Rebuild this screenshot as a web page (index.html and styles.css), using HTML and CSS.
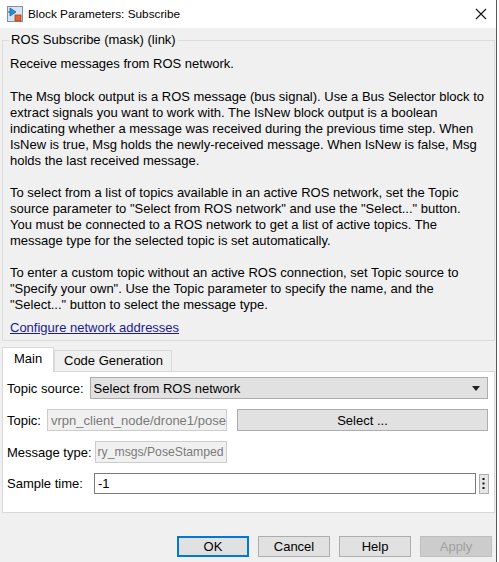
FILE: index.html
```html
<!DOCTYPE html>
<html>
<head>
<meta charset="utf-8">
<link rel="stylesheet" href="styles.css">
</head>
<body>
<div class="window">
  <div class="titlebar">
    <svg class="appicon" width="16" height="16" viewBox="0 0 16 16">
      <rect x="0.5" y="0.5" width="15" height="15" fill="#d8e4f0" stroke="#7f93a8"/>
      <path d="M3 2 L3 10 L9 6 Z" fill="#2a8fd6" stroke="#1a5f9a" stroke-width="0.8"/>
      <line x1="1" y1="6" x2="3" y2="6" stroke="#1a5f9a"/>
      <rect x="8" y="9" width="6" height="6" fill="#e8602c" stroke="#a8401a" stroke-width="0.8"/>
    </svg>
    <span class="title">Block Parameters: Subscribe</span>
    <svg class="close" width="12" height="12" viewBox="0 0 12 12">
      <path d="M1 1 L11 11 M11 1 L1 11" stroke="#111" stroke-width="1.1"/>
    </svg>
  </div>
  <div class="content">
    <fieldset class="group">
      <legend class="legend">ROS Subscribe (mask) (link)</legend>
      <p class="para para-first">Receive messages from ROS network.</p>
      <p class="para">The Msg block output is a ROS message (bus signal). Use a Bus Selector block to<br>extract signals you want to work with. The IsNew block output is a boolean<br>indicating whether a message was received during the previous time step. When<br>IsNew is true, Msg holds the newly-received message. When IsNew is false, Msg<br>holds the last received message.</p>
      <p class="para">To select from a list of topics available in an active ROS network, set the Topic<br>source parameter to "Select from ROS network" and use the "Select..." button.<br>You must be connected to a ROS network to get a list of active topics. The<br>message type for the selected topic is set automatically.</p>
      <p class="para">To enter a custom topic without an active ROS connection, set Topic source to<br>"Specify your own". Use the Topic parameter to specify the name, and the<br>"Select..." button to select the message type.</p>
      <a class="link">Configure network addresses</a>
    </fieldset>

    <div class="tabs">
      <div class="tab tab-active">Main</div>
      <div class="tab">Code Generation</div>
    </div>
    <div class="panel">
      <div class="row row-source">
        <span class="label">Topic source:</span>
        <div class="dropdown">
          <span>Select from ROS network</span>
          <svg width="8" height="5" viewBox="0 0 8 5"><path d="M0 0 L8 0 L4 5 Z" fill="#222"/></svg>
        </div>
      </div>
      <div class="row row-topic">
        <span class="label">Topic:</span>
        <div class="field disabled topic-field"><span>vrpn_client_node/drone1/pose</span></div>
        <div class="btn select-btn">Select ...</div>
      </div>
      <div class="row row-type">
        <span class="label">Message type:</span>
        <div class="field disabled type-field"><span>ry_msgs/PoseStamped</span></div>
      </div>
      <div class="row row-sample">
        <span class="label">Sample time:</span>
        <div class="field sample-field">-1</div>
        <div class="dots"><svg width="3" height="11" viewBox="0 0 3 11"><rect x="0.5" y="0" width="2" height="2" fill="#111"/><rect x="0.5" y="4.5" width="2" height="2" fill="#111"/><rect x="0.5" y="9" width="2" height="2" fill="#111"/></svg></div>
      </div>
    </div>

    <div class="buttons">
      <div class="btn dlg-btn ok">OK</div>
      <div class="btn dlg-btn">Cancel</div>
      <div class="btn dlg-btn">Help</div>
      <div class="btn dlg-btn apply">Apply</div>
    </div>
  </div>
</div>
</body>
</html>
```
FILE: styles.css
```css
* { box-sizing: border-box; }
html, body { margin: 0; padding: 0; background: #ffffff; }
body {
  width: 499px;
  height: 562px;
  overflow: hidden;
  font-family: "Liberation Sans", Arial, sans-serif;
  font-size: 13px;
  color: #000;
}
.window {
  width: 497px;
  height: 562px;
  background: #f0f0f0;
  border-right: 1px solid #5a5a5a;
  display: flex;
  flex-direction: column;
}
.titlebar {
  height: 28px;
  background: #ffffff;
  display: flex;
  align-items: center;
  padding-left: 7px;
  flex-shrink: 0;
}
.appicon { margin-right: 5px; }
.title { font-size: 11.8px; flex: 1; }
.close { margin-right: 9px; }
.content {
  padding: 0 1px 0 2px;
  display: flex;
  flex-direction: column;
}
.group {
  margin: 4px 0 0 0;
  padding: 8px 0 6px 7px;
  border: 1px solid #dcdcdc;
  height: 309px;
  min-width: 0;
}
.legend {
  padding: 0 2px;
  margin-left: -1px;
  line-height: 16px;
}
.para {
  margin: 0 0 16px 0;
  line-height: 16px;
  white-space: nowrap;
}
.para-first { margin-bottom: 17px; }
.link {
  display: block;
  color: #1b1b8f;
  text-decoration: underline;
  line-height: 16px;
  margin-top: -9px;
}
.tabs {
  display: flex;
  align-items: flex-end;
  margin-top: 6px;
  height: 24px;
}
.tab {
  border: 1px solid #d9d9d9;
  border-bottom: none;
  height: 21px;
  padding: 0 8px 0 9px;
  line-height: 20px;
  background: #f0f0f0;
}
.tab-active {
  height: 25px;
  background: #fff;
  margin-bottom: -1px;
  position: relative;
  z-index: 1;
  line-height: 22px;
  padding: 0 11px 0 11px;
  width: 52px;
}
.panel {
  background: #fff;
  border: 1px solid #d9d9d9;
  height: 142px;
  padding: 5px 6px 0 4px;
  display: flex;
  flex-direction: column;
}
.row {
  display: flex;
  align-items: center;
  gap: 6px;
}
.label { white-space: nowrap; flex-shrink: 0; }
.dropdown {
  flex: 1;
  height: 22px;
  background: #e1e1e1;
  border: 1px solid #adadad;
  display: flex;
  align-items: center;
  justify-content: space-between;
  padding: 0 7px 0 3px;
}
.row-topic { margin-top: 10px; }
.row-type { margin-top: 10px; }
.row-sample { margin-top: 10px; }
.field {
  height: 22px;
  border: 1px solid #7a7a7a;
  background: #fff;
  display: flex;
  align-items: center;
  padding: 0 3px;
  white-space: nowrap;
  overflow: hidden;
  flex-shrink: 0;
}
.disabled {
  background: #f0f0f0;
  border-color: #cccccc;
  color: #7a7a7a;
}
.topic-field { width: 180px; }
.select-btn { flex: 1; margin-left: 4px; height: 22px; }
.type-field { width: 132px; margin-left: -3px; padding: 0 1px 0 2px; font-size: 12.2px; }
.sample-field { width: 382px; margin-left: 5px; height: 21px; }
.dots {
  width: 10px;
  height: 20px;
  border: 1px solid #adadad;
  background: #e6e6e6;
  display: flex;
  align-items: center;
  justify-content: center;
  margin-left: -3px;
  flex-shrink: 0;
}
.btn {
  background: #e1e1e1;
  border: 1px solid #adadad;
  display: flex;
  align-items: center;
  justify-content: center;
}
.buttons {
  display: flex;
  justify-content: flex-end;
  gap: 9px;
  margin-top: 23px;
  padding-right: 3px;
}
.dlg-btn { width: 72px; height: 21px; }
.ok { border: 2px solid #0078d7; }
.apply { background: #cccccc; border-color: #bfbfbf; color: #a0a0a0; }
```
